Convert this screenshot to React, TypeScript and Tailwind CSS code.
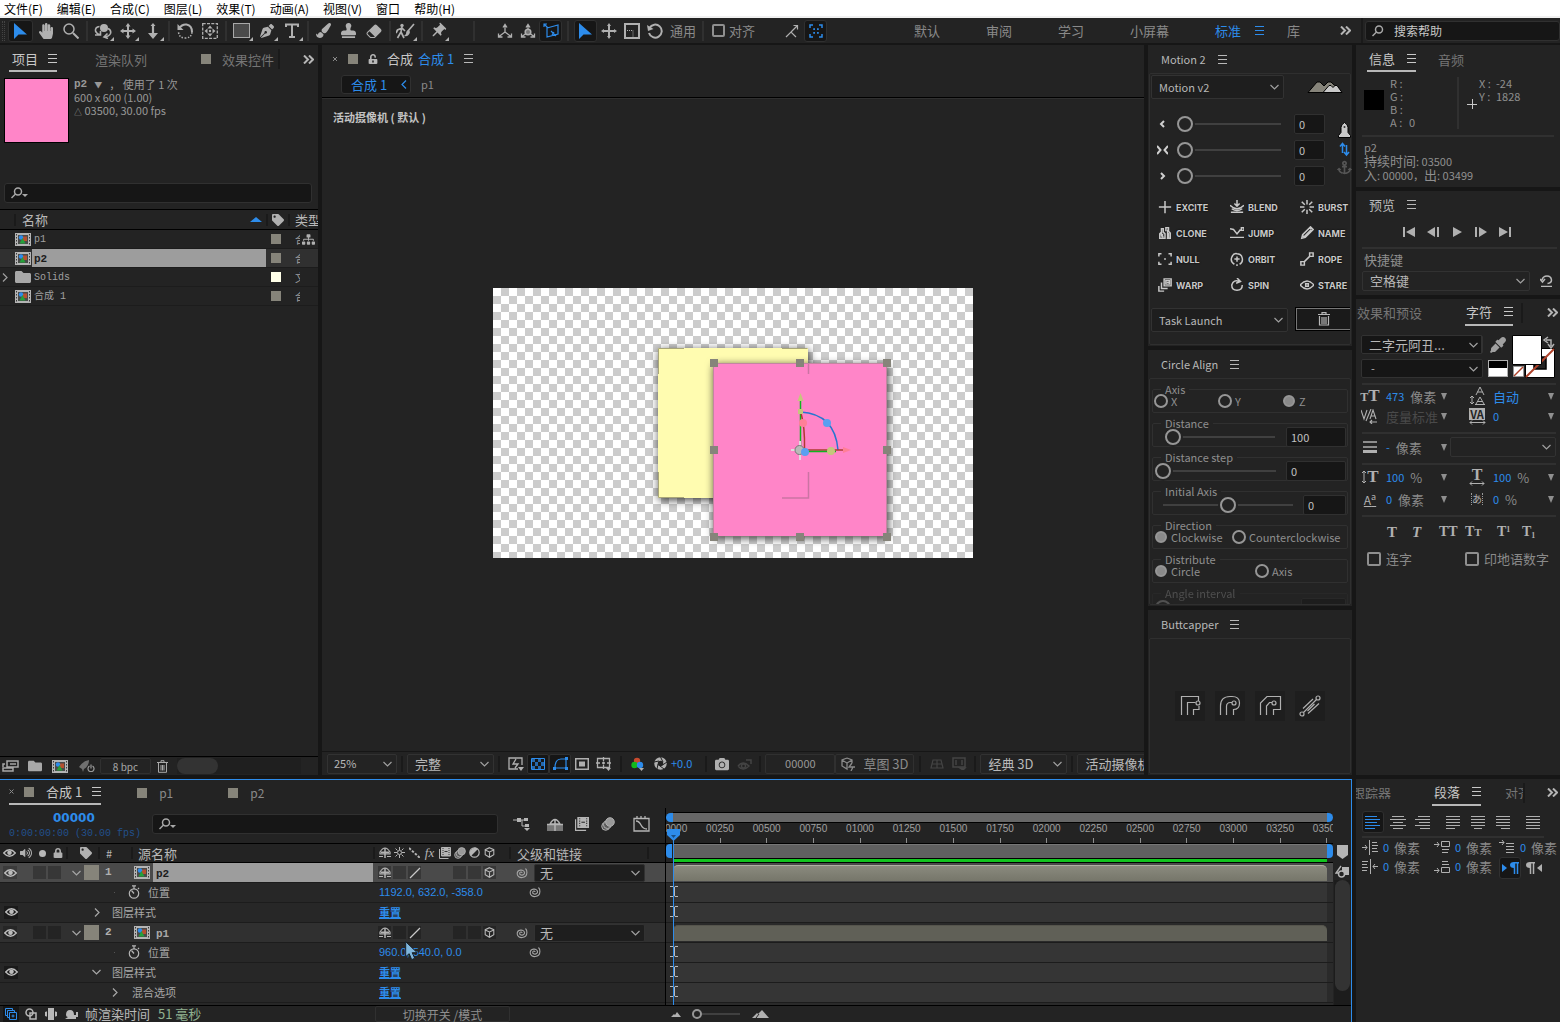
import React from "react";
import {
  FaAnchor,
  FaCamera,
  FaEyeDropper,
  FaFolder,
  FaHandPaper,
  FaLock,
  FaPaintBrush,
  FaPenNib,
  FaSitemap,
  FaStamp,
  FaTag,
  FaUnlockAlt,
  FaVolumeUp,
} from "react-icons/fa";
import { BsEraserFill } from "react-icons/bs";
import { MdPushPin } from "react-icons/md";
import { clsx } from "clsx";

type IconProps = {
  w?: number;
  h?: number;
  className?: string;
  children?: React.ReactNode;
};

const Icon = ({ w = 16, h = 16, className, children }: IconProps) => (
  <svg
    width={w}
    height={h}
    viewBox={`0 0 ${w} ${h}`}
    fill="none"
    stroke="currentColor"
    strokeWidth="1.5"
    className={clsx("shrink-0", className)}
    aria-hidden="true"
  >
    {children}
  </svg>
);

const MenuIcon = ({ className }: { className?: string }) => (
  <Icon w={9} h={9} className={className}>
    <path d="M0 .5h9M0 4.5h9M0 8.5h9" strokeWidth="1" />
  </Icon>
);

const DoubleChevron = () => (
  <Icon w={11} h={9} className="text-[#b5b5b5]">
    <path d="M1 .5l4 4-4 4M6 .5l4 4-4 4" strokeWidth="2" />
  </Icon>
);

const Chevron = ({ className }: { className?: string }) => (
  <Icon w={9} h={6} className={className}>
    <path d="M.5 1l4 4 4-4" strokeWidth="1.2" />
  </Icon>
);

const ChevronRight = ({ className }: { className?: string }) => (
  <Icon w={6} h={9} className={className}>
    <path d="M1 .5l4 4-4 4" strokeWidth="1.2" />
  </Icon>
);

const Caret = () => (
  <Icon w={6} h={7} className="text-[#8f8f8f]">
    <path d="M0 0h6L3 7z" fill="currentColor" stroke="none" />
  </Icon>
);

const SearchIcon = ({ caret = true }: { caret?: boolean }) => (
  <Icon w={18} h={12} className="text-[#a8a8a8]">
    <circle cx="7" cy="4.5" r="3.5" />
    <path d="M4.5 7L.5 11" />
    {caret && <path d="M11 7h6l-3 3z" fill="currentColor" stroke="none" />}
  </Icon>
);

const ArrowIcon = ({ className }: { className?: string }) => (
  <Icon w={13} h={16} className={className}>
    <path d="M0 0v16l4.5-4.5H13z" fill="currentColor" stroke="none" />
  </Icon>
);

const FilmIcon = () => (
  <Icon w={16} h={13}>
    <path d="M0 0h16v13H0z" fill="#b4b4b4" stroke="none" />
    <path d="M1.5 1v12M14.5 1v12" stroke="#3a3a3a" strokeDasharray="1.5 1.5" strokeWidth="1" />
    <path d="M3 2h10v9H3z" fill="#4a4a4a" stroke="none" />
    <path d="M7.500 3.500H12V8H7.500z" fill="#b5502f" stroke="none" />
    <circle cx="6" cy="4.5" r="2.2" fill="#2d8ceb" stroke="none" />
    <path d="M7.500 5l3 5.500h-6z" fill="#25a03a" stroke="none" />
  </Icon>
);

const EyeIcon = () => (
  <Icon w={13} h={8} className="text-[#bdbdbd]">
    <path d="M.7 4Q6.500-2.500 12.300 4 6.500 10.500.7 4z" strokeWidth="1.3" />
    <circle cx="6.5" cy="3.8" r="2.3" fill="currentColor" stroke="none" />
  </Icon>
);

const CubeIcon = () => (
  <Icon w={11} h={11} className="text-[#b5b5b5]">
    <path d="M5.500.7l4.300 2v5L5.500 10.300l-4.300-2.600v-5zM1.200 2.900l4.300 2 4.300-2M5.500 5v5" strokeWidth="1.1" />
  </Icon>
);

const ShyIcon = () => (
  <Icon w={12} h={11} className="text-[#b5b5b5]">
    <path d="M1 7V5Q6-3 11 5v2zM0 9.500h4M8 9.500h4" strokeWidth="1.2" />
    <path d="M2 5.500h8" strokeWidth="2" />
    <path d="M6 1v10" strokeWidth="1.5" />
  </Icon>
);

const BlurIcon = ({ s = 12 }: { s?: number }) => (
  <svg width={s} height={s} viewBox="0 0 12 12" fill="#5c5c5c" stroke="#b5b5b5" strokeWidth=".8" aria-hidden="true">
    <circle cx="4" cy="8" r="3.4" />
    <circle cx="5.5" cy="6.5" r="3.4" />
    <circle cx="7.7" cy="4.3" r="3.7" fill="#999" />
  </svg>
);

const SpiralIcon = () => (
  <Icon w={13} h={12} className="text-[#a5a5a5]">
    <path d="M7 6c0-1.500-2.500-1.200-2.300.6.2 2.300 5 2 4.800-1C9.200 2 2 2.200 2.200 7c.3 5 9.600 5 9.700-1.500Q12 3 10.500 1.500" strokeWidth="1.1" />
  </Icon>
);

const StopwatchIcon = () => (
  <Icon w={12} h={14} className="text-[#b5b5b5]">
    <circle cx="6" cy="8.5" r="4.7" strokeWidth="1.2" />
    <path d="M4 .8h4M6 1v3M6 8.500L3.500 5.500M10 3l1 1" strokeWidth="1.2" />
  </Icon>
);

const FrameStackIcon = ({ s = 12 }: { s?: number }) => (
  <svg width={s} height={s} viewBox="0 0 12 12" fill="none" stroke="#b5b5b5" aria-hidden="true">
    <path d="M.5 2v9.500h9" />
    <path d="M2.500.5h9v8.500h-9z" fill="#b5b5b5" />
    <path d="M4 1v8M10 1v8" stroke="#3a3a3a" strokeDasharray="1 1" />
    <path d="M5.500 4.500h3" stroke="#333" />
  </svg>
);

const Swatch = ({ className }: { className?: string }) => (
  <span className={clsx("size-[10px] shrink-0 bg-[#86847a]", className)} />
);

const Divider = ({ className }: { className?: string }) => (
  <span className={clsx("block h-[2px] shrink-0 bg-[#303030]", className)} />
);

const Bar = ({ className }: { className?: string }) => (
  <span className={clsx("w-[2px] shrink-0 bg-[#1a1a1a]", className)} />
);

type SelectBoxProps = {
  label: string;
  value: string;
  className?: string;
  selectClass?: string;
};

const SelectBox = ({ label, value, className, selectClass }: SelectBoxProps) => (
  <div className={clsx("relative rounded-[2px] border border-[#323232]", className)}>
    <select
      aria-label={label}
      className={clsx("block size-full appearance-none bg-transparent pr-4 outline-none", selectClass ?? "pl-1")}
    >
      <option>{value}</option>
    </select>
    <Chevron className="pointer-events-none absolute top-1/2 right-1 -translate-y-1/2 text-[#a0a0a0]" />
  </div>
);

const Range = ({ label, value = 0, className }: { label: string; value?: number; className?: string }) => (
  <input
    type="range"
    aria-label={label}
    defaultValue={value}
    className={clsx(
      "h-4 min-w-0 appearance-none bg-transparent",
      "[&::-webkit-slider-runnable-track]:h-[2px] [&::-webkit-slider-runnable-track]:bg-[#404040]",
      "[&::-webkit-slider-thumb]:-mt-[7px] [&::-webkit-slider-thumb]:size-4 [&::-webkit-slider-thumb]:appearance-none",
      "[&::-webkit-slider-thumb]:rounded-full [&::-webkit-slider-thumb]:border-2 [&::-webkit-slider-thumb]:border-[#969696]",
      "[&::-webkit-slider-thumb]:bg-[#232323] [&::-webkit-slider-thumb]:shadow-[0_0_0_2px_#232323]",
      className
    )}
  />
);

const NumberBox = ({ label, value, className }: { label: string; value: string; className?: string }) => (
  <input
    aria-label={label}
    defaultValue={value}
    className={clsx(
      "h-5 rounded-[2px] border border-[#303030] bg-[#161616] pl-1 text-[11px] text-[#c0c0c0] outline-none",
      className
    )}
  />
);

const menus = ["文件(F)", "编辑(E)", "合成(C)", "图层(L)", "效果(T)", "动画(A)", "视图(V)", "窗口", "帮助(H)"];

const MenuBar = () => (
  <nav className="flex h-[18px] shrink-0 gap-[14px] border-b-2 border-[#f0f0f0] bg-white pl-1 text-[12px] leading-[15px] text-black">
    {menus.map((menu) => (
      <button key={menu} className="whitespace-nowrap">
        {menu}
      </button>
    ))}
  </nav>
);

type ToolProps = { label: string; active?: boolean; corner?: boolean; small?: boolean; children: React.ReactNode };

const Tool = ({ label, active, corner, small, children }: ToolProps) => (
  <button
    aria-label={label}
    className={clsx(
      "relative flex h-[22px] shrink-0 items-center justify-center rounded-[3px] border",
      small ? "w-[23px]" : "w-[25px]",
      active ? "border-[#303030] bg-[#161616] text-[#2d8ceb]" : "border-transparent text-[#b0b0b0]"
    )}
  >
    {children}
    {corner && (
      <Icon w={4} h={4} className="absolute right-0 bottom-0">
        <path d="M4 0v4H0z" fill="currentColor" stroke="none" />
      </Icon>
    )}
  </button>
);

const ToolSep = () => (
  <span className="flex h-5 w-[7px] shrink-0 justify-center">
    <span className="w-[2px] bg-[#303030]" />
  </span>
);

const AxisIcon = ({ dot }: { dot?: boolean }) => (
  <Icon w={16} h={16}>
    <path d="M8 3v6L2 13.500M8 9l6 4.500M6 4.500L8 1.500l2 3M1.500 10.500V14h4M14.500 10.500V14h-4" strokeWidth="1.3" />
    {dot && <circle cx="8" cy="9" r="2.8" fill="#777" />}
  </Icon>
);

const workspaces = ["默认", "审阅", "学习", "小屏幕"];

const Toolbar = () => (
  <div className="flex h-[25px] shrink-0 items-center bg-[#232323] text-[13px] text-[#8a8a8a]">
    <span className="ml-[2px] h-5 w-[3px] shrink-0 border-x border-dotted border-[#444]" />
    <span className="w-[3px] shrink-0" />
    <Tool label="选取" active>
      <ArrowIcon />
    </Tool>
    <Tool label="手形">
      <FaHandPaper size={16} />
    </Tool>
    <Tool label="缩放">
      <Icon>
        <circle cx="6" cy="6" r="5" />
        <path d="M10 10l5.500 5.500" strokeWidth="2" />
      </Icon>
    </Tool>
    <ToolSep />
    <Tool label="绕光标旋转" corner>
      <Icon w={18}>
        <path d="M5.500 3.500Q1 4 1.500 8q1 3 5 4M1 12h5.500V8" strokeWidth="1.6" />
        <path d="M14 5.500q3.500 1.500 2.500 5-1.500 3-6 3.500M13.500 10.500L10 14l4 1.500" strokeWidth="1.6" />
        <circle cx="10" cy="5" r="4" fill="currentColor" stroke="none" />
      </Icon>
    </Tool>
    <Tool label="平移" corner>
      <Icon>
        <path d="M8 2v12M2 8h12" strokeWidth="2" />
        <path d="M8 0l2.500 3.500h-5zM8 16l2.500-3.500h-5zM0 8l3.500-2.500v5zM16 8l-3.500-2.500v5z" fill="currentColor" stroke="none" />
      </Icon>
    </Tool>
    <Tool label="推拉" corner>
      <Icon w={12}>
        <path d="M6 2v10" strokeWidth="2.2" />
        <path d="M6 0l2.500 3h-5zM6 16L1 10h10z" fill="currentColor" stroke="none" />
      </Icon>
    </Tool>
    <ToolSep />
    <Tool label="旋转">
      <Icon>
        <path d="M2 5.500Q5 1 9.500 1.500 15 2.500 15 9" strokeWidth="2" />
        <path d="M15 9q-.5 6-7 6-6 0-6.500-6" strokeDasharray="1.5 1.5" />
        <path d="M.5 1v6h6z" fill="currentColor" stroke="none" />
      </Icon>
    </Tool>
    <Tool label="锚点">
      <Icon>
        <path d="M.7.7h14.600v14.600H.7z" strokeDasharray="3 1.3" strokeWidth="1.3" />
        <path d="M8 2.500l2.500 3h-5zM8 13.500l2.500-3h-5zM2.500 8l3-2.500v5zM13.500 8l-3-2.500v5z" fill="currentColor" stroke="none" />
        <circle cx="8" cy="8" r="1.2" fill="currentColor" stroke="none" />
      </Icon>
    </Tool>
    <ToolSep />
    <Tool label="矩形" corner>
      <span className="h-[15px] w-[17px] border border-[#a8a8a8] bg-[#4a4a4a]" />
    </Tool>
    <Tool label="钢笔" corner>
      <FaPenNib size={14} />
    </Tool>
    <Tool label="文字" corner>
      <Icon w={14} h={15}>
        <path d="M1 4V1.500h12V4M7 1.500V14M4 14h6" strokeWidth="2" />
      </Icon>
    </Tool>
    <ToolSep />
    <Tool label="画笔">
      <FaPaintBrush size={15} />
    </Tool>
    <Tool label="仿制图章">
      <FaStamp size={15} />
    </Tool>
    <Tool label="橡皮擦">
      <BsEraserFill size={16} />
    </Tool>
    <ToolSep />
    <Tool label="Roto 笔刷" corner>
      <Icon w={19}>
        <circle cx="6" cy="2.5" r="1.7" fill="currentColor" stroke="none" />
        <path d="M6 4L5 9l-3.500 6M5 9l3 6M6 5L1.500 7 0 10M6 5l3 3M18 1l-6 7" strokeWidth="1.7" />
        <path d="M13 7q-3 0-3 4l-2 2q5 1 6-4z" fill="currentColor" stroke="none" />
      </Icon>
    </Tool>
    <ToolSep />
    <Tool label="人偶控点" corner>
      <MdPushPin size={18} className="rotate-45" />
    </Tool>
    <span className="w-5 shrink-0" />
    <ToolSep />
    <span className="w-4 shrink-0" />
    <Tool label="本地轴" small>
      <AxisIcon />
    </Tool>
    <Tool label="世界轴" small>
      <AxisIcon dot />
    </Tool>
    <Tool label="视图轴" small active>
      <Icon>
        <path d="M1 1l4 4M1 4V1h3M4 5l11-3v9L4 14zM8 8l5 5M9 12l2-3" strokeWidth="1.2" />
      </Icon>
    </Tool>
    <span className="flex w-3 shrink-0 justify-center">
      <span className="h-5 w-[2px] bg-[#303030]" />
    </span>
    <Tool label="通用控件" small active>
      <ArrowIcon />
    </Tool>
    <Tool label="位置" small>
      <Icon>
        <path d="M8 2v12M2 8h12" strokeWidth="2" />
        <path d="M8 0l2 3H6zM8 16l2-3H6zM0 8l3-2v4zM16 8l-3-2v4z" fill="currentColor" stroke="none" />
      </Icon>
    </Tool>
    <Tool label="缩放控件" small>
      <Icon>
        <path d="M1 1h14v14H1z" strokeWidth="2" />
        <path d="M3 7.500h6V14" strokeDasharray="1 1" strokeWidth="1" />
      </Icon>
    </Tool>
    <Tool label="旋转控件" small>
      <Icon>
        <path d="M2.500 5a6.500 6.500 0 1 1-.5 5" strokeWidth="2" />
        <path d="M0 2l1 6 5.500-2z" fill="currentColor" stroke="none" />
      </Icon>
    </Tool>
    <span className="ml-1 shrink-0">通用</span>
    <span className="ml-[6px] h-5 w-[2px] shrink-0 bg-[#303030]" />
    <label className="ml-2 flex shrink-0 items-center gap-1">
      <input type="checkbox" className="size-[13px] appearance-none rounded-[2px] border-2 border-[#8f8f8f]" />
      对齐
    </label>
    <span className="w-6 shrink-0" />
    <Tool label="对齐边缘">
      <Icon w={14} h={14}>
        <path d="M1 13l5-5 5 5M6 8l6-6M8.500 1.500H12.500V5.500" strokeWidth="1.2" />
      </Icon>
    </Tool>
    <Tool label="对齐特征" active small>
      <Icon w={14} h={14}>
        <path d="M1 4V1h3M10 1h3v3M13 10v3h-3M4 13H1v-3M5 6V5h1M8 5h1v1M9 8v1H8M6 9H5V8" />
      </Icon>
    </Tool>
    <div className="ml-auto flex items-center gap-[46px]">
      {workspaces.map((name) => (
        <button key={name} className="whitespace-nowrap">
          {name}
        </button>
      ))}
      <button className="flex w-[26px] items-center gap-[14px] whitespace-nowrap text-[#2d8ceb]">
        标准
        <MenuIcon />
      </button>
      <button>库</button>
    </div>
    <button aria-label="更多工作区" className="ml-10 shrink-0">
      <DoubleChevron />
    </button>
    <Bar className="ml-[10px] h-full" />
    <label className="ml-[2px] flex h-5 w-[195px] shrink-0 items-center rounded-[3px] border border-[#303030] bg-[#161616] pl-[6px]">
      <SearchIcon caret={false} />
      <input
        aria-label="搜索帮助"
        placeholder="搜索帮助"
        className="ml-1 min-w-0 text-[12px] outline-none placeholder:text-[#c8c8c8]"
      />
    </label>
  </div>
);

const items = [
  { name: "p1", type: "合成", kind: "comp" },
  { name: "p2", type: "合成", kind: "comp" },
  { name: "Solids", type: "文件夹", kind: "folder" },
  { name: "合成 1", type: "合成", kind: "comp" },
];

const ProjectPanel = () => (
  <section className="flex w-[318px] shrink-0 flex-col bg-[#232323]">
    <div className="flex h-7 shrink-0 items-center text-[13px] text-[#757575]">
      <button className="ml-[9px] flex h-[26px] items-center gap-[10px] border-b-2 border-[#b8b8b8] pl-[3px] text-[#c8c8c8]">
        项目
        <MenuIcon />
      </button>
      <button className="ml-[38px]">渲染队列</button>
      <Swatch className="ml-[54px]" />
      <button className="ml-[11px]">效果控件</button>
      <Bar className="ml-1 h-5" />
      <button aria-label="更多面板" className="ml-auto pr-1">
        <DoubleChevron />
      </button>
    </div>
    <div className="mt-[5px] flex gap-[5px] pl-1 text-[#989898]">
      <span className="size-[65px] border border-black bg-[#ff85c8]" />
      <div className="leading-[13px]">
        <p className="flex gap-[7px] whitespace-pre">
          <b className="font-['Liberation_Mono',monospace]">p2</b>
          <span className="text-[8px]">▼</span>
          <span>， 使用了 1 次</span>
        </p>
        <p>600 x 600 (1.00)</p>
        <p>
          <span className="text-[8px]">△</span> 03500, 30.00 fps
        </p>
      </div>
    </div>
    <label className="mt-10 mr-[6px] ml-1 flex h-5 shrink-0 items-center rounded-[3px] border border-[#303030] bg-[#161616] pl-[6px]">
      <SearchIcon />
      <input aria-label="搜索项目" className="min-w-0 flex-1 outline-none" />
    </label>
    <div className="mt-[6px] min-h-0 flex-1 overflow-hidden">
      <table className="w-full table-fixed border-collapse text-left">
        <thead>
          <tr className="h-5 border-y border-black text-[13px] leading-4 text-[#b8b8b8]">
            <th className="w-[266px] p-0 pl-[14px] font-normal">
              <span className="flex items-center">
                <Bar className="h-3" />
                <span className="ml-[6px] flex-1">名称</span>
                <Icon w={12} h={5} className="mr-1 text-[#2d8ceb]">
                  <path d="M0 5l6-5 6 5z" fill="currentColor" stroke="none" />
                </Icon>
              </span>
            </th>
            <th className="w-[29px] p-0" aria-label="标签">
              <span className="flex items-center gap-1 text-[#b0b0b0]">
                <Bar className="h-3" />
                <FaTag size={12} />
                <Bar className="h-3" />
              </span>
            </th>
            <th className="overflow-hidden p-0 font-normal whitespace-nowrap">类型</th>
          </tr>
        </thead>
        <tbody className="text-[#a0a0a0]">
          {items.map((item) => (
            <tr
              key={item.name}
              className={clsx("h-[19px] border-b border-[#1c1c1c]", item.name === "p2" && "bg-[#303030]")}
            >
              <td className="p-0">
                <span className="flex h-[18px] items-center">
                  <span className="flex w-[15px] shrink-0 justify-start pl-[2px]">
                    {item.kind === "folder" && <ChevronRight />}
                  </span>
                  {item.kind === "folder" ? <FaFolder size={16} className="text-[#a8a8a8]" /> : <FilmIcon />}
                  <span
                    className={clsx(
                      "ml-[1px] h-full flex-1 pl-[2px] font-['Liberation_Mono','Noto_Sans_CJK_SC',monospace] leading-[20px]",
                      item.name === "p2" ? "bg-[#9d9d9d] text-[11px] font-bold text-[#1c1c1c]" : "text-[10px]"
                    )}
                  >
                    {item.name}
                  </span>
                </span>
              </td>
              <td className="p-0 pl-[5px]">
                <span
                  className={clsx("block size-[10px]", item.kind === "folder" ? "bg-[#ffffe8]" : "bg-[#86847a]")}
                />
              </td>
              <td className="p-0">
                <span className="flex h-[18px] items-center gap-[2px]">
                  <span className="w-[5px] overflow-hidden whitespace-nowrap">{item.type}</span>
                  {item.name === "p1" && <FaSitemap size={13} className="shrink-0 text-[#b0b0b0]" />}
                </span>
              </td>
            </tr>
          ))}
        </tbody>
      </table>
    </div>
    <div className="flex h-[19px] shrink-0 items-center border-t border-black pl-[2px] text-[#a8a8a8]">
      <button aria-label="解释素材">
        <Icon w={17} h={12}>
          <path d="M5 1h11v6H5zM8 4h6M3 4H1v3M1 8h10v3H1z" />
        </Icon>
      </button>
      <button aria-label="新建文件夹" className="ml-[9px]">
        <FaFolder size={14} />
      </button>
      <button aria-label="新建合成" className="ml-[10px]">
        <FilmIcon />
      </button>
      <button aria-label="项目设置" className="ml-[11px] text-[#707070]">
        <Icon w={17} h={12}>
          <path d="M0 7Q4 1 10 0q0 6-5 9l-1 3-1-3zM2 12L0 11z" fill="currentColor" stroke="none" />
          <path d="M10.500 6a3 3 0 1 0 3 0M12 4.500v4" stroke="#999" strokeWidth="1.2" />
        </Icon>
      </button>
      <button className="ml-1 h-4 w-[51px] rounded-[2px] border border-[#303030] text-[10px]">8 bpc</button>
      <button aria-label="删除" className="ml-[6px]">
        <Icon w={11} h={13}>
          <path d="M0 2.500h11M4 2V.7h3V2M1.500 3v9.300h8V3M4 5v5.500M5.500 5v5.500M7 5v5.500" strokeWidth="1" />
        </Icon>
      </button>
      <span className="ml-[9px] h-4 w-[124px] bg-[#1f1f1f]">
        <span className="block h-full w-[41px] rounded-full bg-[#333]" />
      </span>
    </div>
  </section>
);

const handles = [
  [221, 75],
  [307, 75],
  [394, 75],
  [221, 162],
  [394, 162],
  [221, 249],
  [307, 249],
  [394, 249],
];

const Stage = () => (
  <svg width="480" height="270" viewBox="0 0 480 270" className="shrink-0" role="img" aria-label="合成 1">
    <defs>
      <pattern id="checker" width="16" height="16" patternUnits="userSpaceOnUse">
        <path d="M0 0h16v16H0z" fill="#fff" />
        <path d="M8 0h8v8H8zM0 8h8v8H0z" fill="#ccc" />
      </pattern>
      <filter id="soft" x="-20%" y="-20%" width="140%" height="140%">
        <feDropShadow dx="1" dy="2" stdDeviation="4" floodColor="#000" floodOpacity=".75" />
      </filter>
    </defs>
    <path d="M0 0h480v270H0z" fill="url(#checker)" />
    <path d="M165 60h150v150H165z" fill="#fffcb0" filter="url(#soft)" />
    <path d="M165.500 86V60.500H191M289 60.500h25.500M165.500 184v25.500H191" stroke="#a9a678" fill="none" />
    <path d="M220 75h174v173H220z" fill="#ff85c8" filter="url(#soft)" />
    <path d="M220.500 75.500h173v173h-173z" fill="none" stroke="#86847a" strokeDasharray="1 1" />
    <path d="M315.500 76v10M315.500 184v26H289" stroke="#cb74a3" fill="none" strokeWidth="1.5" />
    {handles.map(([x, y]) => (
      <path key={`${x}-${y}`} d={`M${x - 4} ${y - 4}h8v8h-8z`} fill="#86847a" />
    ))}
    <g fill="none">
      <path d="M307.500 124Q342 126 345 162" stroke="#2676d0" strokeWidth="1.5" />
      <path d="M307.500 112v48" stroke="#10b520" strokeWidth="1.5" />
      <path d="M308 125q4 14 3.500 36M312 162h42" stroke="#b03a30" strokeWidth="1.5" />
      <path d="M309 163.500h34" stroke="#10b520" strokeWidth="1.5" />
    </g>
    <path d="M307.500 105l3 8h-6zM305 121h5v5h-5z" fill="#c5c77c" />
    <path d="M350 159l8 3-8 3z" fill="#ff7f97" />
    <circle cx="310" cy="135" r="4" fill="#ff7f97" />
    <circle cx="334" cy="135" r="4" fill="#5a9ff0" />
    <path d="M307 153v19M298 162h10" stroke="#ddd" strokeWidth="2" />
    <circle cx="306.5" cy="162" r="4.5" fill="#b9b9b9" stroke="#777" />
    <circle cx="338" cy="163" r="4" fill="#c5c77c" />
    <circle cx="312" cy="164" r="4" fill="#5a9ff0" />
  </svg>
);

const ViewerButton = ({ label, active, children }: { label: string; active?: boolean; children: React.ReactNode }) => (
  <button
    aria-label={label}
    className={clsx(
      "flex h-5 w-[22px] shrink-0 items-center justify-center rounded-[2px] border",
      active ? "border-[#303030] bg-[#161616] text-[#2d8ceb]" : "border-transparent text-[#b0b0b0]"
    )}
  >
    {children}
  </button>
);

const ViewerPanel = () => (
  <section className="flex min-w-0 flex-1 flex-col bg-[#232323]">
    <div className="flex h-[27px] shrink-0 items-center text-[13px]">
      <button aria-label="关闭" className="ml-[10px] text-[#8a8a8a]">
        <Icon w={6} h={6}>
          <path d="M1 1l4 4M5 1L1 5" strokeWidth="1" />
        </Icon>
      </button>
      <Swatch className="ml-[10px]" />
      <FaUnlockAlt size={10} className="ml-[10px] text-[#b8b8b8]" />
      <span className="ml-[9px] text-[#c8c8c8]">合成</span>
      <span className="ml-[5px] text-[#2d8ceb]">合成 1</span>
      <MenuIcon className="ml-[10px] text-[#b8b8b8]" />
    </div>
    <div className="flex h-[26px] shrink-0 items-center border-b border-black pl-[19px]">
      <button className="flex h-[19px] w-[70px] items-center justify-between rounded-[3px] border border-[#303030] bg-[#161616] pr-[3px] pl-[9px] text-[13px] text-[#2d8ceb]">
        合成 1
        <ChevronRight className="rotate-180" />
      </button>
      <button className="ml-[10px] text-[#8a8a8a]">p1</button>
    </div>
    <div className="flex min-h-0 flex-1 flex-col overflow-hidden border-t border-[#303030]">
      <p className="shrink-0 pt-3 pl-[11px] font-bold text-[#c4c4c4]">活动摄像机 ( 默认 )</p>
      <div className="flex min-h-0 flex-1 items-center justify-center pb-[29px]">
        <Stage />
      </div>
    </div>
    <div className="flex h-6 shrink-0 items-center overflow-hidden border-t border-[#161616] pl-[5px] whitespace-nowrap text-[#b8b8b8]">
      <SelectBox label="放大率" value="25%" className="h-5 w-[70px] shrink-0" selectClass="pl-[6px]" />
      <Bar className="mx-1 h-4" />
      <SelectBox
        label="分辨率"
        value="完整"
        className="h-5 w-[87px] shrink-0"
        selectClass="pl-[7px] text-[13px] leading-[18px]"
      />
      <Bar className="mr-[5px] ml-1 h-4" />
      <ViewerButton label="快速预览">
        <Icon w={16} h={14}>
          <path d="M10 12H1V1h13v7M8 2L5 7h5L7 11" strokeWidth="1.3" />
          <path d="M10 10h6l-3 4z" fill="currentColor" stroke="none" />
        </Icon>
      </ViewerButton>
      <ViewerButton label="透明网格" active>
        <Icon w={14} h={12}>
          <path d="M.5.5h13v11H.5z" strokeWidth="1" />
          <path
            d="M1 1h3v3H1zM7 1h3v3H7zM4 4h3v4H4zM10 4h3v4h-3zM1 8h3v3H1zM7 8h3v3H7z"
            fill="currentColor"
            fillOpacity=".7"
            stroke="none"
          />
        </Icon>
      </ViewerButton>
      <ViewerButton label="蒙版可见性" active>
        <Icon w={15} h={13}>
          <path d="M2 11Q2 2 8 2h5v9z" strokeWidth="1.2" />
          <path d="M0 10h3v3H0zM12 0h3v3h-3zM12 10h3v3h-3z" fill="currentColor" stroke="none" />
        </Icon>
      </ViewerButton>
      <ViewerButton label="目标区域">
        <Icon w={14} h={12}>
          <path d="M.7.7h12.600v10.600H.7z" />
          <path d="M4 3.500h6v5H4z" fill="currentColor" stroke="none" />
        </Icon>
      </ViewerButton>
      <ViewerButton label="网格和参考线">
        <Icon w={16} h={14}>
          <path d="M1.500 1.500h12v9h-12zM7.500 0v4M7.500 8v4M0 6h4M11 6h4M6 6h3M7.500 4.500v3" strokeWidth="1.3" />
          <path d="M10 11h5l-2.500 3z" fill="currentColor" stroke="none" />
        </Icon>
      </ViewerButton>
      <Bar className="mx-[5px] h-4" />
      <ViewerButton label="通道">
        <Icon w={14} h={14}>
          <g stroke="none">
            <circle cx="6" cy="4" r="3.2" fill="#c84a2e" />
            <circle cx="3.5" cy="8" r="3.2" fill="#12b91e" />
            <circle cx="9" cy="8" r="3.2" fill="#2d8ceb" />
            <path d="M8 11h5l-2.500 3z" fill="currentColor" />
          </g>
        </Icon>
      </ViewerButton>
      <ViewerButton label="重置曝光度">
        <Icon w={13} h={13}>
          <circle cx="6.5" cy="6.5" r="4.5" strokeWidth="3.5" />
          <path d="M6.500 0L9 5M13 5L8.500 8M10 12L6 9M3 12l1-5M0 5l5-1" stroke="#232323" strokeWidth="1" />
        </Icon>
      </ViewerButton>
      <button className="text-[#2d8ceb]">+0.0</button>
      <Bar className="mr-1 ml-[13px] h-4" />
      <ViewerButton label="拍摄快照">
        <FaCamera size={14} />
      </ViewerButton>
      <ViewerButton label="显示快照">
        <Icon w={15} h={12} className="text-[#444]">
          <path d="M1 8q5-6 11 0-6 6-11 0M9 2h5v4" />
          <circle cx="6.5" cy="8" r="2" />
        </Icon>
      </ViewerButton>
      <Bar className="mx-1 h-4" />
      <button className="h-5 w-[70px] shrink-0 rounded-[2px] border border-[#303030] text-[#989898]">00000</button>
      <button className="flex h-5 w-[79px] shrink-0 items-center rounded-[2px] border border-[#303030] pl-[5px] text-[13px] text-[#8a8a8a]">
        <Icon w={16} h={14} className="mr-[6px]">
          <path d="M6 1l5 2v3M6 1L1 3v6l5 3V6L1 3M6 6l5-3M11 6l-3 4h4l-2 4M11 10h3" strokeWidth="1.3" />
        </Icon>
        草图 3D
      </button>
      <Bar className="mx-[5px] h-4" />
      <ViewerButton label="3D 地平面">
        <Icon w={14} h={10} className="text-[#444]">
          <path d="M3 1h8l2 8H1zM7 1v8M2 5h10" strokeWidth="1.2" />
        </Icon>
      </ViewerButton>
      <ViewerButton label="3D 视图">
        <Icon w={15} h={13} className="text-[#444]">
          <path d="M1 1h12v9H1zM4 3v5M10 3v5" />
          <path d="M8 11h5l-2 2z" fill="currentColor" />
        </Icon>
      </ViewerButton>
      <Bar className="mx-1 h-4" />
      <SelectBox
        label="渲染器"
        value="经典 3D"
        className="h-5 w-[87px] shrink-0"
        selectClass="pl-[7px] text-[13px] leading-[18px]"
      />
      <Bar className="mx-1 h-4" />
      <button className="h-5 shrink-0 rounded-[2px] border border-[#303030] pl-[7px] text-[13px]">活动摄像机</button>
    </div>
  </section>
);

const ScriptTitle = ({ children }: { children: string }) => (
  <h2 className="flex h-7 shrink-0 items-center gap-3 pl-3 text-[#b8b8b8]">
    {children}
    <MenuIcon />
  </h2>
);

const sliderIcons = [
  { name: "in", d: "M7 2L4 5l3 3" },
  { name: "both", d: "M0 1l3.500 4L0 9M11 1L7.500 5 11 9" },
  { name: "out", d: "M4 2l3 3-3 3" },
];

const motionActions = [
  { name: "EXCITE", d: "M8 1v14M1 8h14" },
  { name: "BLEND", d: "M8 0v7M5 4l3 3 3-3M0 6q8 8 16 0M2 10q6 4 12 0M1 14h14" },
  { name: "BURST", d: "M8 0v5M8 11v5M0 8h5M11 8h5M2 2l3.500 3.500M10.500 10.500L14 14M14 2l-3.500 3.500M5.500 10.500L2 14" },
  { name: "CLONE", d: "M2 14V9l2-2V3h2v4l2 2v5zM9 6V2h3v4l2 2v6h-4M4 10h2M4 12h2M3 8l3 5M11 4v9M12 8v5M4 4v8" },
  { name: "JUMP", d: "M0 3l4 1 4 5 4-5M13 2h3v3h-3zM0 13h16" },
  { name: "NAME", d: "M2 14l1-4 9-9 3 3-9 9zM5 12l8-8M3 11l2 2" },
  { name: "NULL", d: "M1 5V2h3M12 2h3v3M15 11v3h-3M4 14H1v-3M7 8h2" },
  { name: "ORBIT", d: "M5 14Q0 11 2 6t6-4q5 0 6 5t-3 7M8 5v6M5 8h6M8 14v2" },
  { name: "ROPE", d: "M1 11h4v4H1zM11 1h4v4h-4zM5 11l6-6" },
  { name: "WARP", d: "M7 1h8v8H7zM9 3h4v4H9zM10 5h3M4 5v7h7M1 9v6h6" },
  { name: "SPIN", d: "M11 4Q4 1 2 8q0 6 6 6t6-6M8 0l4 4-5 2" },
  { name: "STARE", d: "M0 8q8-9 16 0-8 9-16 0M6.500 6.500h3v3h-3z" },
];

const MotionPanel = () => (
  <section className="flex h-[301px] shrink-0 flex-col bg-[#232323] px-[1px] pb-[1px]">
    <ScriptTitle>Motion 2</ScriptTitle>
    <div className="flex min-h-0 flex-1 flex-col rounded-[2px] border border-[#2f2f2f] pt-[1px] pl-[1px]">
      <div className="flex items-center">
        <SelectBox label="脚本" value="Motion v2" className="h-6 w-[133px] bg-[#1e1e1e] text-[#b8b8b8]" selectClass="pl-[7px]" />
        <Icon w={36} h={14} className="ml-[23px]">
          <path d="M1 12.500L10 2h3l4 4 4-4h3l11 10.500z" fill="#86847a" stroke="#000" strokeWidth="1" />
          <path d="M16 12.500l6-7h2l2 2 2-2h2l5 7z" fill="#c8c8c8" stroke="#000" strokeWidth="1" />
        </Icon>
      </div>
      <div className="mt-[15px] flex">
        <div className="flex flex-col gap-[6px]">
          {sliderIcons.map(({ name, d }) => (
            <div key={name} className="flex h-5 items-center">
              <Icon w={11} h={10} className="ml-[6px] text-[#d0d0d0]">
                <path d={d} strokeWidth="2" />
              </Icon>
              <Range label={`ease ${name}`} className="ml-[9px] w-[104px]" />
              <NumberBox label={`ease ${name} value`} value="0" className="ml-[13px] w-[31px]" />
            </div>
          ))}
        </div>
        <div className="ml-3 flex flex-col items-center gap-[3px] pt-2 text-[#c8c8c8]">
          <Icon w={13} h={17}>
            <path
              d="M6.500.5Q10 2.500 10 5.500v5l2.500 3v2H.500v-2l2.500-3v-5q0-3 3.500-5z"
              fill="currentColor"
              stroke="#000"
              strokeWidth="1"
            />
            <circle cx="6.500" cy="5" r="1" fill="#333" stroke="none" />
          </Icon>
          <Icon w={11} h={15} className="text-[#2d8ceb]">
            <path d="M3.500 11V2M1 4.500L3.500 1.500 6 4.500M7.500 3v9M5 10l2.500 3 2.500-3" />
          </Icon>
          <FaAnchor size={15} className="text-[#555]" />
        </div>
      </div>
      <div className="mt-[13px] grid grid-cols-[72px_70px_1fr] gap-y-[10px] overflow-hidden pl-[7px] font-['Inter',sans-serif] text-[9px] font-bold text-[#c8c8c8]">
        {motionActions.map(({ name, d }) => (
          <button key={name} className="flex h-4 items-center gap-1 [text-shadow:0_0_2px_#000]">
            <svg
              width="14"
              height="14"
              viewBox="0 0 16 16"
              fill="none"
              stroke="currentColor"
              strokeWidth="1.7"
              className="shrink-0"
              aria-hidden="true"
            >
              <path d={d} />
            </svg>
            {name}
          </button>
        ))}
      </div>
      <div className="mt-[14px] flex shrink-0 gap-2 overflow-hidden py-[1px]">
        <SelectBox label="任务" value="Task Launch" className="h-6 w-[137px] shrink-0 bg-[#1e1e1e] text-[#b8b8b8]" selectClass="pl-[7px]" />
        <button
          aria-label="清理"
          className="flex h-[22px] flex-1 items-center justify-center border border-r-0 border-[#777] bg-[#1a1a1a] text-[#b8b8b8] outline outline-black"
        >
          <Icon w={12} h={14}>
            <path d="M0 2.500h12M4 2V.7h4V2M1.500 4v9h9V4M4 5v7M6 5v7M8 5v7" strokeWidth="1.2" />
          </Icon>
        </button>
      </div>
    </div>
  </section>
);

const Group = ({ title, dim, children }: { title: string; dim?: boolean; children: React.ReactNode }) => (
  <fieldset
    className={clsx(
      "h-[29px] min-w-0 shrink-0 rounded-[2px] border border-[#303030] text-[#8f8f8f]",
      dim && "opacity-40"
    )}
  >
    <legend className="ml-2 px-1 leading-[10px]">{title}</legend>
    {children}
  </fieldset>
);

const Radio = ({ name, label, on, className }: { name: string; label: string; on?: boolean; className?: string }) => (
  <label className={clsx("flex items-center gap-[3px] leading-3", className)}>
    <input
      type="radio"
      name={name}
      defaultChecked={on}
      className="size-[14px] appearance-none rounded-full border-2 border-[#969696] checked:mx-[1px] checked:size-3 checked:bg-[#8a8a8a]"
    />
    {label}
  </label>
);

const CircleAlignPanel = () => (
  <section className="flex h-64 shrink-0 flex-col bg-[#232323] px-[1px] pb-[1px]">
    <ScriptTitle>Circle Align</ScriptTitle>
    <div className="flex min-h-0 flex-1 flex-col gap-[5px] overflow-hidden rounded-[2px] border border-[#2f2f2f] px-[2px] pt-[5px]">
      <Group title="Axis">
        <div className="flex h-[14px] pl-[1px]">
          <Radio name="axis" label="X" className="w-16" />
          <Radio name="axis" label="Y" className="w-16" />
          <Radio name="axis" label="Z" on />
        </div>
      </Group>
      <Group title="Distance">
        <div className="flex h-[17px] items-center justify-between pr-[1px] pl-3">
          <Range label="Distance" className="w-[110px]" />
          <NumberBox label="Distance value" value="100" className="w-[60px]" />
        </div>
      </Group>
      <Group title="Distance step">
        <div className="flex h-[17px] items-center justify-between pr-[1px] pl-[2px]">
          <Range label="Distance step" className="w-[121px]" />
          <NumberBox label="Distance step value" value="0" className="w-[60px]" />
        </div>
      </Group>
      <Group title="Initial Axis">
        <div className="flex h-[17px] items-center justify-between pr-[1px] pl-[10px]">
          <Range label="Initial Axis" value={50} className="w-[130px]" />
          <NumberBox label="Initial Axis value" value="0" className="w-[43px]" />
        </div>
      </Group>
      <Group title="Direction">
        <div className="flex h-[14px] pl-[1px]">
          <Radio name="direction" label="Clockwise" on className="w-[78px]" />
          <Radio name="direction" label="Counterclockwise" />
        </div>
      </Group>
      <Group title="Distribute">
        <div className="flex h-[14px] pl-[1px]">
          <Radio name="distribute" label="Circle" on className="w-[101px]" />
          <Radio name="distribute" label="Axis" />
        </div>
      </Group>
      <Group title="Angle interval" dim>
        <div className="flex items-center justify-between pr-[1px] pl-[2px]">
          <Range label="Angle interval" className="w-[121px]" />
          <NumberBox label="Angle interval value" value="0" className="w-[45px]" />
        </div>
      </Group>
    </div>
  </section>
);

const caps = [
  { name: "直角", d: "M6.500 24V5.500h17V10M12.500 24V11.500h8M18.500 24v-5.500h5.500V15", dots: [[23, 12]] },
  { name: "圆角", d: "M5.500 24V15q0-9.500 9.500-9.500h2q7.500 0 7.500 6.500T18.500 18.500V24M11.500 24v-8.500q0-4 4-4h1.500", dots: [[19, 12]] },
  { name: "斜角", d: "M5.500 24V12l6.500-6.500h13.500v13h-7V24M11.500 24v-9l3-3.500H17", dots: [[19, 12]] },
  { name: "斜线", d: "M21.500 8.500l-13 13M8 17.500L18 8M13 22.500L24 12.500M12.500 20l7-7", dots: [[23, 7], [7, 23]] },
];

const ButtcapperPanel = () => (
  <section className="flex min-h-0 flex-1 flex-col bg-[#232323] px-[1px] pb-[1px]">
    <ScriptTitle>Buttcapper</ScriptTitle>
    <div className="flex min-h-0 flex-1 items-center justify-center gap-[10px] rounded-[2px] border border-[#2f2f2f]">
      {caps.map(({ name, d, dots }) => (
        <button key={name} aria-label={name} className="bg-[#1e1e1e] text-[#b0b0b0]">
          <Icon w={30} h={30}>
            <path d={d} strokeWidth="1.2" />
            {dots.map(([x, y]) => (
              <circle key={x} cx={x} cy={y} r="2" fill="#1e1e1e" strokeWidth="1.2" />
            ))}
          </Icon>
        </button>
      ))}
    </div>
  </section>
);

const InfoPanel = () => (
  <section className="h-[142px] shrink-0 bg-[#232323] text-[#8f8f8f]">
    <div className="flex h-7 items-center text-[13px]">
      <button className="ml-[11px] flex h-[26px] items-center gap-3 border-b-2 border-[#b8b8b8] pl-[2px] text-[#c8c8c8]">
        信息
        <MenuIcon />
      </button>
      <button className="ml-[22px] text-[#757575]">音频</button>
    </div>
    <div className="mt-1 flex leading-[13px]">
      <span className="mt-[13px] ml-2 size-5 bg-black" />
      <dl className="ml-[6px] grid w-[69px] grid-cols-[19px_1fr] border-r-2 border-[#303030]">
        <dt>R :</dt>
        <dd />
        <dt>G :</dt>
        <dd />
        <dt>B :</dt>
        <dd />
        <dt>A :</dt>
        <dd>0</dd>
      </dl>
      <Icon w={10} h={10} className="mt-[22px] ml-2 text-[#c8c8c8]">
        <path d="M5.500 0v10M0 5.500h10" strokeWidth="1" />
      </Icon>
      <dl className="ml-[2px] grid h-[26px] grid-cols-[17px_1fr]">
        <dt>X :</dt>
        <dd>-24</dd>
        <dt>Y :</dt>
        <dd>1828</dd>
      </dl>
    </div>
    <Divider className="mx-[6px] mt-[6px]" />
    <div className="pt-[3px] pl-2 leading-[14px]">
      <p>p2</p>
      <p>
        <span className="text-[13px]">持续时间</span>: 03500
      </p>
      <p>
        <span className="text-[13px]">入</span>: 00000，<span className="text-[13px]">出</span>: 03499
      </p>
    </div>
  </section>
);

const transport = [
  { name: "第一帧", d: "M0 0h2v10H0zM12 0v10L3 5z" },
  { name: "上一帧", d: "M8 0v10L0 5zM10 0h2v10h-2z" },
  { name: "播放", d: "M2 0v10l9-5z" },
  { name: "下一帧", d: "M0 0h2v10H0zM4 0v10l8-5z" },
  { name: "最后一帧", d: "M0 0v10l9-5zM10 0h2v10h-2z" },
];

const PreviewPanel = () => (
  <section className="h-[104px] shrink-0 bg-[#232323] text-[13px] text-[#8f8f8f]">
    <h2 className="flex h-[27px] items-center gap-3 pl-[13px] text-[#b8b8b8]">
      预览
      <MenuIcon />
    </h2>
    <div className="mt-[9px] flex justify-center gap-3 pr-[2px]">
      {transport.map(({ name, d }) => (
        <button key={name} aria-label={name}>
          <Icon w={12} h={10} className="text-[#b0b0b0]">
            <path d={d} fill="currentColor" stroke="none" />
          </Icon>
        </button>
      ))}
    </div>
    <Divider className="mr-[3px] ml-[6px] mt-[10px]" />
    <p className="mt-[3px] pl-2 leading-4">快捷键</p>
    <div className="mt-[3px] ml-[6px] flex items-center gap-[10px] text-[#b8b8b8]">
      <SelectBox label="快捷键" value="空格键" className="h-5 w-[168px]" selectClass="pl-[7px] leading-[18px]" />
      <button aria-label="重置">
        <Icon w={13} h={12}>
          <path d="M2 5q1-4 5-4t4.500 4q0 3-4 3.500M0 4l2.500 3L5 4M1 11.500h11" />
        </Icon>
      </button>
    </div>
  </section>
);

const Unit = ({ children }: { children: string }) => <span className="text-[13px] text-[#8a8a8a]">{children}</span>;

const CharField = ({
  icon,
  value,
  unit,
  className,
}: {
  icon: React.ReactNode;
  value: string;
  unit?: string;
  className?: string;
}) => (
  <div className={clsx("flex h-5 items-center", className)}>
    <span className="flex w-[18px] shrink-0 justify-center text-[#b0b0b0]">{icon}</span>
    <button className="ml-[7px] flex flex-1 items-center gap-[6px] whitespace-nowrap text-[#2d8ceb]">
      {value}
      {unit && <Unit>{unit}</Unit>}
    </button>
    <Caret />
  </div>
);

const Glyph = ({ children, className }: { children: React.ReactNode; className?: string }) => (
  <span className={clsx("font-['Liberation_Serif',serif] leading-4 font-bold whitespace-nowrap text-[#b0b0b0]", className)}>
    {children}
  </span>
);

const CharacterPanel = () => (
  <section className="min-h-0 flex-1 overflow-hidden bg-[#232323]">
    <div className="flex h-[27px] items-center text-[13px] text-[#757575]">
      <button className="w-[109px] pl-[1px] text-left whitespace-nowrap">效果和预设</button>
      <button className="flex h-full items-center gap-3 border-b-2 border-[#b8b8b8] pl-[1px] text-[#c8c8c8]">
        字符
        <MenuIcon />
      </button>
      <Bar className="ml-2 h-5" />
      <button aria-label="更多面板" className="ml-auto pr-[2px]">
        <DoubleChevron />
      </button>
    </div>
    <div className="mt-[9px] flex pl-[5px]">
      <div className="flex w-[122px] flex-col gap-[5px] text-[#b8b8b8]">
        <SelectBox
          label="字体"
          value="二字元阿丑..."
          className="h-[19px] bg-[#161616]"
          selectClass="pl-[7px] text-[13px] leading-[17px] border-r border-[#323232] bg-clip-padding"
        />
        <SelectBox label="字体样式" value="-" className="h-[19px] bg-[#161616]" selectClass="pl-[9px]" />
      </div>
      <div className="ml-[5px] flex w-5 flex-col items-center gap-[7px] pt-[2px] text-[#a0a0a0]">
        <FaEyeDropper size={16} />
        <span className="h-[17px] w-5 border border-[#b0b0b0] bg-linear-to-b from-black from-50% to-white to-50%" />
      </div>
      <Icon w={43} h={43} className="ml-1">
        <path d="M13.500 13.500h29v29h-29z" fill="#fff" stroke="#000" strokeWidth="1" />
        <path d="M22 22h12v12H22z" fill="#232323" stroke="#000" />
        <path d="M14 42l28-28" stroke="#b0432b" strokeWidth="2" />
        <path d="M.5.5h29v29H.5z" fill="#fff" stroke="#000" strokeWidth="1" />
        <path d="M1.500 31.500h10v10h-10z" fill="#fff" stroke="#999" strokeWidth="1" />
        <path d="M2 41l9-9" stroke="#b0432b" />
        <path d="M34 5h5v6M36 2l-4 3 4 3M36 9l3 4 3-4" stroke="#b0b0b0" />
      </Icon>
    </div>
    <Divider className="mr-1 ml-[6px] mt-[5px]" />
    <div className="grid grid-cols-[86px_86px] gap-x-[21px] pt-[1px] pl-[5px]">
      <CharField icon={<Glyph className="text-[17px]"><small className="text-[12px]">T</small>T</Glyph>} value="473" unit="像素" />
      <CharField
        icon={
          <Icon w={17} h={18}>
            <path d="M3 9v8M1 11l2-2 2 2M1 15l2 2 2-2M7 8l4-8 4 8M8.500 5h5M7 17l4-7 4 7M8.500 14.500h5M6 17.500h10" strokeWidth="1" />
          </Icon>
        }
        value="自动"
        className="text-[13px]"
      />
      <CharField
        icon={
          <Icon w={18} h={15}>
            <path d="M0 1l3 9 3-9M5 12L10 0M9 10l3-9 3 9M10 7h4M9 13h7M11 11l-2 2 2 2" strokeWidth="1.1" />
          </Icon>
        }
        value=""
        unit="度量标准"
        className="[&_button]:gap-0 [&_button>span]:text-[#4a4a4a]"
      />
      <CharField
        icon={
          <span className="flex flex-col items-center">
            <b className="bg-[#b0b0b0] px-[1px] text-[11px] leading-3 text-[#232323]">VA</b>
            <Icon w={17} h={5}>
              <path d="M1 2.500h15M3 .5l-2 2 2 2M14 .5l2 2-2 2" strokeWidth="1" />
            </Icon>
          </span>
        }
        value="0"
      />
    </div>
    <Divider className="mr-1 ml-[6px] mt-[6px]" />
    <div className="flex items-center pt-[3px] pl-[5px]">
      <CharField
        icon={
          <Icon w={14} h={12}>
            <path d="M0 1h14M0 6h14" />
            <path d="M0 10.500h14" strokeWidth="3" />
          </Icon>
        }
        value="-"
        unit="像素"
        className="w-[86px]"
      />
      <SelectBox label="描边样式" value="" className="mr-1 ml-[3px] h-5 flex-1" />
    </div>
    <Divider className="mr-1 ml-[6px] mt-[6px]" />
    <div className="grid grid-cols-[86px_86px] gap-x-[21px] gap-y-[2px] pt-[2px] pl-[5px]">
      <CharField
        icon={
          <span className="flex items-center">
            <Icon w={6} h={14}>
              <path d="M3 1v12M1 3l2-2 2 2M1 11l2 2 2-2" strokeWidth="1" />
            </Icon>
            <Glyph className="text-[17px]">T</Glyph>
          </span>
        }
        value="100"
        unit="%"
      />
      <CharField
        icon={
          <span className="flex flex-col items-center">
            <Glyph className="text-[16px] leading-[13px]">T</Glyph>
            <Icon w={16} h={5}>
              <path d="M1 2.500h14M3 .5l-2 2 2 2M13 .5l2 2-2 2" strokeWidth="1" />
            </Icon>
          </span>
        }
        value="100"
        unit="%"
      />
      <CharField
        icon={<span className="text-[12px] whitespace-nowrap underline">A<sup className="text-[9px]">a</sup></span>}
        value="0"
        unit="像素"
      />
      <CharField icon={<span className="border-x border-dotted border-[#999] text-[10px] leading-3">あ</span>} value="0" unit="%" />
    </div>
    <Divider className="mr-1 ml-[6px] mt-[6px]" />
    <div className="flex items-center pt-[7px] pl-[31px]">
      <button className="w-[25px] text-left"><Glyph className="text-[15px]">T</Glyph></button>
      <button className="w-[27px] text-left"><Glyph className="text-[15px] italic">T</Glyph></button>
      <button className="w-[26px] text-left"><Glyph className="text-[14px]">TT</Glyph></button>
      <button className="w-8 text-left"><Glyph className="text-[14px]">T<small className="text-[11px]">T</small></Glyph></button>
      <button className="w-[25px] text-left"><Glyph className="text-[14px]">T<sup className="text-[8px]">1</sup></Glyph></button>
      <button className="text-left"><Glyph className="text-[14px]">T<sub className="text-[8px]">1</sub></Glyph></button>
    </div>
    <div className="mt-[11px] flex pl-[11px] text-[13px] leading-4 text-[#8a8a8a]">
      <label className="flex w-[98px] items-center gap-[5px]">
        <input type="checkbox" className="size-[14px] appearance-none rounded-[2px] border-2 border-[#8f8f8f]" />
        连字
      </label>
      <label className="flex items-center gap-[5px] whitespace-nowrap">
        <input type="checkbox" className="size-[14px] appearance-none rounded-[2px] border-2 border-[#8f8f8f]" />
        印地语数字
      </label>
    </div>
  </section>
);

const aligns = [
  { name: "左对齐", d: "M0 1.500h12M0 4.500h15M0 7.500h12M0 10.500h15M0 13.500h10", gap: "mr-[3px]", on: true },
  { name: "居中", d: "M2 1.500h12M0 4.500h16M3 7.500h10M0 10.500h16M3 13.500h10", gap: "mr-[2px]" },
  { name: "右对齐", d: "M4 1.500h12M1 4.500h15M5 7.500h11M1 10.500h15M6 13.500h10", gap: "mr-[9px]" },
  { name: "末行左", d: "M1 1.500h14M1 4.500h14M1 7.500h14M1 10.500h14M1 13.500h9", gap: "mr-[3px]" },
  { name: "末行中", d: "M1 1.500h14M1 4.500h14M1 7.500h14M1 10.500h14M4 13.500h8", gap: "mr-[3px]" },
  { name: "末行右", d: "M1 1.500h14M1 4.500h14M1 7.500h14M1 10.500h14M6 13.500h9", gap: "mr-2" },
  { name: "全部", d: "M1 1.500h14M1 4.500h14M1 7.500h14M1 10.500h14M1 13.500h14", gap: "" },
];

const indents = [
  { name: "左缩进", d: "M0 7.500h5M3 5l2 2.500L3 10M7.500 0v15M10 2.500h5M10 5.500h6M10 8.500h5M10 11.500h6" },
  { name: "段前", d: "M0 4.500h5M3 2l2 2.500L3 7M7.500 1.500h8v5h-8zM8 9.500h7M8 12.500h6" },
  { name: "首行缩进", d: "M0 2.500h5M3 0l2 2.500L3 5M7 3.500h8M7 6.500h8M7 9.500h8M7 12.500h8" },
  { name: "右缩进", d: "M16 7.500h-5M13 5l-2 2.500 2 2.500M8.500 0v15M0 2.500h6M0 5.500h5M0 8.500h6M0 11.500h5" },
  { name: "段后", d: "M0 11.500h5M3 9l2 2.500L3 14M7.500 8.500h8v5h-8zM8 2.500h6M8 5.500h7" },
];

const ParagraphPanel = () => (
  <section className="h-[243px] shrink-0 overflow-hidden bg-[#232323]">
    <div className="-ml-1 flex h-[27px] items-center text-[13px] text-[#757575]">
      <button className="w-20 overflow-hidden text-left whitespace-nowrap">跟踪器</button>
      <button className="flex h-full items-center gap-3 border-b-2 border-[#b8b8b8] pl-[2px] text-[#c8c8c8]">
        段落
        <MenuIcon />
      </button>
      <button className="ml-6 w-[18px] overflow-hidden text-left whitespace-nowrap">对齐</button>
      <Bar className="h-5" />
      <button aria-label="更多面板" className="ml-auto pr-[2px]">
        <DoubleChevron />
      </button>
    </div>
    <div className="mt-[5px] flex items-center pl-[6px]">
      {aligns.map(({ name, d, gap, on }) => (
        <button
          key={name}
          aria-label={name}
          className={clsx(
            "flex h-[22px] w-[22px] shrink-0 items-center justify-center rounded-[3px] border",
            gap,
            on ? "border-[#303030] bg-[#161616] text-[#2d8ceb]" : "border-transparent text-[#b0b0b0]"
          )}
        >
          <Icon h={14}>
            <path d={d} strokeWidth="1" />
          </Icon>
        </button>
      ))}
    </div>
    <Divider className="mr-4 ml-[6px] mt-[3px]" />
    <div className="grid grid-cols-[72px_65px_1fr] pl-[6px] text-[#2d8ceb]">
      {indents.map(({ name, d }) => (
        <button key={name} aria-label={name} className="flex h-[19px] items-center gap-[5px] overflow-hidden whitespace-nowrap">
          <Icon h={15} className="text-[#b0b0b0]">
            <path d={d} strokeWidth="1" />
          </Icon>
          0 <Unit>像素</Unit>
        </button>
      ))}
      <div className="flex items-center">
        <button aria-label="从左到右" className="flex h-[22px] w-[22px] items-center justify-center rounded-[3px] border border-[#303030] bg-[#161616]">
          <Icon w={17} h={12}>
            <path d="M0 2v8l5-4zM12 0q-4 0-4 3t4 3z" fill="currentColor" stroke="none" />
            <path d="M12 .7h5M12.500 0v12M15.500 0v12" />
          </Icon>
        </button>
        <button aria-label="从右到左" className="ml-1 text-[#b0b0b0]">
          <Icon w={17} h={12}>
            <path d="M17 2v8l-5-4zM5 0Q1 0 1 3t4 3z" fill="currentColor" stroke="none" />
            <path d="M5 .7h5M5.500 0v12M8.500 0v12" />
          </Icon>
        </button>
      </div>
    </div>
  </section>
);

type Row = {
  kind: "layer" | "position" | "style" | "blend";
  name: string;
  value?: string;
  index?: number;
  selected?: boolean;
  open?: boolean;
};

const rows: Row[] = [
  { kind: "layer", name: "p2", index: 1, selected: true },
  { kind: "position", name: "位置", value: "1192.0, 632.0, -358.0" },
  { kind: "style", name: "图层样式", value: "重置" },
  { kind: "layer", name: "p1", index: 2 },
  { kind: "position", name: "位置", value: "960.0, 540.0, 0.0" },
  { kind: "style", name: "图层样式", value: "重置", open: true },
  { kind: "blend", name: "混合选项", value: "重置" },
];

const Cell = ({ children, empty }: { children?: React.ReactNode; empty?: boolean }) => (
  <span className={clsx("mr-[2px] flex size-[13px] shrink-0 items-center justify-center", !empty && "bg-black/25")}>
    {children}
  </span>
);

const LayerRow = ({ row }: { row: Row }) => (
  <div
    className={clsx(
      "flex h-5 items-center border-b border-[#1c1c1c]",
      row.selected ? "bg-[#4a4a4a]" : "bg-[#303030]"
    )}
  >
    <span className="flex w-[33px] shrink-0 pl-[3px]">
      <button aria-label="显示" className="flex h-[13px] w-[14px] items-center justify-center bg-black/20">
        <EyeIcon />
      </button>
    </span>
    <span className="flex w-9 shrink-0">
      <Cell />
      <Cell />
    </span>
    <button aria-label="展开" className="w-[15px] shrink-0 pl-[3px] text-[#a5a5a5]">
      <Chevron />
    </button>
    <span className="h-[15px] w-[15px] shrink-0 bg-[#86847a]" />
    <b className="w-[35px] shrink-0 pl-[6px] font-['Liberation_Mono',monospace] text-[#b0b0b0]">{row.index}</b>
    <FilmIcon />
    <b
      className={clsx(
        "ml-[3px] h-full w-[220px] shrink-0 pl-[3px] font-['Liberation_Mono',monospace] leading-[22px]",
        row.selected ? "bg-[#9d9d9d] text-[#1c1c1c]" : "text-[#a8a8a8]"
      )}
    >
      {row.name}
    </b>
    <span className="ml-[5px] flex w-[137px] shrink-0">
      <Cell>
        <ShyIcon />
      </Cell>
      <Cell />
      <Cell>
        <Icon w={12} h={12} className="text-[#c8c8c8]">
          <path d="M1 11L11 1" strokeWidth="1.3" />
        </Icon>
      </Cell>
      <Cell empty />
      <Cell empty />
      <Cell />
      <Cell />
      <Cell>
        <CubeIcon />
      </Cell>
    </span>
    <SpiralIcon />
    <SelectBox
      label={`父级 ${row.name}`}
      value="无"
      className="ml-[6px] h-[18px] w-[111px] shrink-0 bg-[#1e1e1e] text-[#b8b8b8]"
      selectClass="pl-[5px] text-[13px] leading-4"
    />
  </div>
);

const PropertyRow = ({ row }: { row: Row }) => (
  <div className="flex h-5 items-center border-b border-[#1c1c1c] bg-[#272727] pb-[1px]">
    <span className="flex w-[94px] shrink-0 pl-1">
      {row.kind === "style" && (
        <button aria-label="显示" className="flex h-[13px] w-[14px] items-center justify-center bg-[#1a1a1a]">
          <EyeIcon />
        </button>
      )}
    </span>
    <span className="flex w-[285px] shrink-0 items-center text-[#a8a8a8]">
      {row.kind === "position" && (
        <>
          <span className="mr-[13px] ml-5 size-[1px] bg-[#555]" />
          <StopwatchIcon />
          <span className="ml-2">{row.name}</span>
        </>
      )}
      {row.kind === "style" && (
        <>
          <span className="w-[18px]">{row.open ? <Chevron className="-ml-[2px]" /> : <ChevronRight />}</span>
          {row.name}
        </>
      )}
      {row.kind === "blend" && (
        <>
          <ChevronRight className="mr-[14px] ml-[18px]" />
          {row.name}
        </>
      )}
    </span>
    {row.kind === "position" ? (
      <>
        <button className="w-[149px] shrink-0 text-left font-['Liberation_Sans',sans-serif] text-[11px] text-[#2d8ceb]">
          {row.value}
        </button>
        <SpiralIcon />
      </>
    ) : (
      <button className="border-b border-[#2d8ceb] leading-3 font-bold text-[#2d8ceb]">{row.value}</button>
    )}
  </div>
);

const Fx = () => <i className="font-['Liberation_Serif',serif] text-[13px] leading-3 text-[#b5b5b5]">fx</i>;

const switchIcons = [
  <ShyIcon />,
  <Icon w={11} h={11} className="text-[#b5b5b5]">
    <path d="M5.500 0v3M5.500 8v3M0 5.500h3M8 5.500h3M1.500 1.500l2 2M7.500 7.500l2 2M9.500 1.500l-2 2M3.500 7.500l-2 2" strokeWidth="1" />
    <circle cx="5.5" cy="5.5" r="2" strokeWidth="1" />
  </Icon>,
  <Icon w={11} h={11} className="text-[#b5b5b5]">
    <path d="M0 1l11 10" strokeWidth="2" strokeDasharray="2.5 1.5" />
  </Icon>,
  <Fx />,
  <FrameStackIcon />,
  <BlurIcon />,
  <Icon w={11} h={11} className="text-[#b5b5b5]">
    <circle cx="5.5" cy="5.5" r="4.7" strokeWidth="1.2" />
    <path d="M9 2L2 9Q-1 5 3 2t6 0z" fill="currentColor" stroke="none" />
  </Icon>,
  <CubeIcon />,
];

const LayerHeader = () => (
  <div className="flex h-5 items-center border-y border-black text-[13px] text-[#b8b8b8]">
    <span className="flex w-[66px] shrink-0 items-center gap-1 pl-[3px] text-[#b0b0b0]">
      <EyeIcon />
      <FaVolumeUp size={12} />
      <span className="ml-[3px] size-[7px] rounded-full bg-[#b8b8b8]" />
      <FaLock size={10} className="ml-[3px]" />
    </span>
    <Bar className="h-3" />
    <FaTag size={12} className="ml-3 text-[#b0b0b0]" />
    <Bar className="ml-[6px] h-3" />
    <span className="ml-[6px] w-[25px] text-[11px]">#</span>
    <Bar className="h-3" />
    <span className="ml-[5px] w-[235px] shrink-0">源名称</span>
    <Bar className="h-3" />
    <span className="ml-[2px] flex w-[132px] shrink-0">
      {switchIcons.map((icon, index) => (
        <span key={index} className="flex w-[15px] justify-center">
          {icon}
        </span>
      ))}
    </span>
    <Bar className="h-3" />
    <span className="ml-[6px] w-[130px] shrink-0">父级和链接</span>
    <Bar className="h-3" />
  </div>
);

const LayerPane = () => (
  <div className="flex w-[665px] shrink-0 flex-col">
    <div className="flex h-[35px] shrink-0 items-start pt-[3px]">
      <div className="w-[152px] shrink-0 pl-[9px]">
        <p className="pl-11 font-['DejaVu_Sans',sans-serif] text-[12px] leading-[15px] font-bold text-[#2d8ceb]">00000</p>
        <p className="font-['Liberation_Mono',monospace] text-[10px] leading-[15px] whitespace-nowrap text-[#22508c]">
          0:00:00:00 (30.00 fps)
        </p>
      </div>
      <label className="mt-[3px] flex h-5 w-[346px] items-center rounded-[3px] border border-[#303030] bg-[#161616] pl-[6px]">
        <SearchIcon />
        <input aria-label="搜索图层" className="min-w-0 flex-1 outline-none" />
      </label>
      <div className="mt-[5px] ml-[15px] flex items-center text-[#b5b5b5]">
        <button aria-label="合成微型流程图">
          <Icon w={18} h={13}>
            <path d="M0 2h6M8 2h7M9 2v6h6" strokeWidth="1" />
            <path d="M4 0h4v4H4zM11 0h4v3h-4zM12 6h4v3h-4zM11 10h6l-3 3z" fill="currentColor" stroke="none" />
          </Icon>
        </button>
        <button aria-label="隐藏消隐图层" className="ml-4">
          <Icon w={16} h={13}>
            <path d="M0 7h16v6H0z" fill="#777" stroke="none" />
            <path d="M3 6Q8-3 13 6zM8 1v12M0 6.500h16" />
          </Icon>
        </button>
        <button aria-label="帧混合" className="ml-3">
          <FrameStackIcon s={14} />
        </button>
        <button aria-label="运动模糊" className="ml-3">
          <BlurIcon s={14} />
        </button>
        <button aria-label="图表编辑器" className="ml-[18px]">
          <Icon w={17} h={16}>
            <path d="M1 2.500h15V15H1zM3 5q3 0 5 4t6 4M4 0v3M8 0v3M12 0v3" strokeWidth="1.3" />
          </Icon>
        </button>
      </div>
    </div>
    <LayerHeader />
    <div className="min-h-0 flex-1 overflow-hidden bg-[#272727]">
      {rows.map((row, index) =>
        row.kind === "layer" ? <LayerRow key={index} row={row} /> : <PropertyRow key={index} row={row} />
      )}
    </div>
  </div>
);

const ticks = Array.from({ length: 15 }, (_, i) => String(i * 250).padStart(5, "0"));

const TrackPane = () => (
  <div className="relative flex min-w-0 flex-1 flex-col border-l border-black">
    <div className="flex h-[35px] shrink-0 flex-col overflow-hidden pt-1">
      <div className="flex h-[11px] shrink-0">
        <span className="my-[1px] w-[7px] rounded-l-full bg-[#2d8ceb]" />
        <span className="flex-1 border-y border-black bg-[#676767]" />
        <span className="my-[1px] w-[6px] rounded-r-full bg-[#2d8ceb]" />
      </div>
      <div className="overflow-hidden pr-[6px] pl-[7px]">
        <div className="-mx-[23px] flex font-['Liberation_Sans',sans-serif] text-[10px] leading-3 text-[#a0a0a0]">
          {ticks.map((tick) => (
            <span key={tick} className="flex min-w-0 flex-1 flex-col items-center">
              {tick}
              <span className="mt-[3px] h-[5px] w-[1px] bg-[#8f8f8f]" />
            </span>
          ))}
        </div>
      </div>
    </div>
    <div className="flex h-5 shrink-0 border-y border-black">
      <span className="h-[14px] w-[6px] rounded-l-[4px] bg-[#2d8ceb]" />
      <span className="ml-[1px] flex flex-1 flex-col">
        <span className="flex-1 border-t border-[#777] bg-[#606060]" />
        <span className="h-1 border-t border-black bg-[#12c41f]" />
      </span>
      <span className="h-[14px] w-[6px] rounded-r-[4px] bg-[#2d8ceb]" />
    </div>
    <div className="min-h-0 flex-1 overflow-hidden bg-[#2a2a2a]">
      {rows.map((row, index) => (
        <div
          key={index}
          className={clsx("flex h-5 border-b border-[#1c1c1c] pr-[6px] pl-[7px]", row.selected && "bg-[#4a4a4a]")}
        >
          {row.kind === "layer" ? (
            <span
              className={clsx(
                "mt-[2px] mb-[1px] flex-1 rounded-t-[5px] border-t",
                row.selected
                  ? "border-[#b0afa4] bg-linear-to-b from-[#8a8a7e] to-[#76766a]"
                  : "border-[#55544c] bg-[#606057]"
              )}
            />
          ) : (
            <span className="flex-1 bg-[#353535]">
              <Icon w={8} h={11} className="mt-[3px] -ml-[3px] text-[#b8b8b8]">
                <path d="M0 .5h3l1 1 1-1h3M0 10.500h3l1-1 1 1h3M4.500 1v9" strokeWidth="1" />
              </Icon>
            </span>
          )}
        </div>
      ))}
    </div>
    <div className="absolute top-[20px] bottom-0 left-0 flex w-[15px] flex-col items-center">
      <Icon w={13} h={13} className="text-[#2d8ceb]">
        <path d="M0 1h13v6l-6.500 6L0 7z" fill="currentColor" stroke="none" />
        <path d="M4 7h5L6.500 10z" fill="#1a4f86" stroke="none" />
      </Icon>
      <span className="w-[1px] flex-1 bg-[#2d8ceb]" />
    </div>
  </div>
);

const TimelineFooter = () => (
  <div className="flex h-[17px] shrink-0 items-center border-t border-black text-[13px] leading-4 text-[#b8b8b8]">
    <div className="flex w-[375px] shrink-0 items-center">
      <button aria-label="图层开关" className="ml-[3px] flex size-4 items-center justify-center bg-[#161616] text-[#2d8ceb]">
        <Icon w={12} h={12}>
          <path d="M7.500 3V.5h-7v7H3M9.500 5V2.500h-7v7H5M4.500 4.500h7v7h-7zM8 6.500v3M6.500 8h3" strokeWidth="1" />
        </Icon>
      </button>
      <button aria-label="转换控制" className="ml-[6px]">
        <Icon w={12} h={12}>
          <circle cx="4.5" cy="4.5" r="3.5" />
          <path d="M5 5h6v6H5z" />
        </Icon>
      </button>
      <button aria-label="入点出点" className="ml-2">
        <Icon w={12} h={12}>
          <path d="M3 0h6v3l3 1v4l-3 1v3H3V9L0 8V4l3-1z" fill="currentColor" stroke="none" />
          <path d="M2.500 3v6M9.500 3v6" stroke="#232323" strokeWidth="1" />
        </Icon>
      </button>
      <button aria-label="渲染时间" className="ml-2">
        <Icon w={13} h={11}>
          <path d="M0 10h11V8h2V3h-2v3H9Q9 1 5 1T1 6q0 2 2 2z" fill="currentColor" stroke="none" />
        </Icon>
      </button>
      <span className="ml-[7px]">帧渲染时间</span>
      <span className="ml-2 text-[#8fb08f]">51 毫秒</span>
    </div>
    <button className="h-4 w-[135px] shrink-0 rounded-[2px] border border-[#303030] text-[12px] text-[#8f8f8f]">
      切换开关 /模式
    </button>
    <Icon w={10} h={5} className="ml-[161px] text-[#b0b0b0]">
      <path d="M0 5l3-3 1 1 2-3 4 5z" fill="currentColor" stroke="none" />
    </Icon>
    <input
      type="range"
      aria-label="时间缩放"
      defaultValue={0}
      className="ml-[11px] h-3 w-12 appearance-none bg-transparent [&::-webkit-slider-runnable-track]:h-[2px] [&::-webkit-slider-runnable-track]:bg-[#404040] [&::-webkit-slider-thumb]:-mt-1 [&::-webkit-slider-thumb]:size-[10px] [&::-webkit-slider-thumb]:appearance-none [&::-webkit-slider-thumb]:rounded-full [&::-webkit-slider-thumb]:border-2 [&::-webkit-slider-thumb]:border-[#969696] [&::-webkit-slider-thumb]:bg-[#232323]"
    />
    <Icon w={17} h={8} className="ml-3 text-[#b0b0b0]">
      <path d="M0 8l5-5 1 1 4-4 7 8z" fill="currentColor" stroke="none" />
      <path d="M4 8l3-4" stroke="#232323" strokeWidth="1" />
    </Icon>
  </div>
);

const TimelinePanel = () => (
  <section className="relative flex h-[243px] shrink-0 flex-col overflow-hidden border-t border-r border-[#2d8ceb] bg-[#232323]">
    <div className="flex h-7 shrink-0 text-[13px] text-[#8a8a8a]">
      <div className="ml-[9px] flex h-[25px] items-center border-b-2 border-[#b8b8b8]">
        <button aria-label="关闭">
          <Icon w={5} h={5}>
            <path d="M.5.5l4 4M4.500.5l-4 4" strokeWidth="1" />
          </Icon>
        </button>
        <Swatch className="ml-[10px]" />
        <button className="ml-3 flex items-center gap-[10px] text-[#c8c8c8]">
          合成 1
          <MenuIcon />
        </button>
      </div>
      <div className="flex h-[25px] items-center text-[12px]">
        <Swatch className="ml-9" />
        <button className="ml-3">p1</button>
        <Swatch className="ml-[55px]" />
        <button className="ml-3">p2</button>
      </div>
    </div>
    <div className="flex min-h-0 flex-1">
      <LayerPane />
      <TrackPane />
      <div className="flex w-[18px] shrink-0 flex-col items-center pt-[37px]">
        <Icon w={11} h={14} className="text-[#b5b5b5]">
          <path d="M0 0h11v10l-5.500 4L0 10z" fill="currentColor" stroke="none" />
        </Icon>
        <Icon w={14} h={13} className="mt-[6px] text-[#b5b5b5]">
          <path d="M7 2h7v8H7z" fill="currentColor" stroke="none" />
          <path d="M6 1L1 8h4" strokeWidth="1.3" />
          <circle cx="6.5" cy="9" r="3" fill="#232323" />
        </Icon>
        <span className="mt-[2px] flex w-4 flex-1 bg-[#1c1c1c]">
          <span className="mx-auto mb-[14px] w-[15px] rounded-full bg-[#333]" />
        </span>
      </div>
    </div>
    <TimelineFooter />
    <Icon w={13} h={20} className="absolute top-[161px] left-[405px]">
      <path d="M.7.7v15l3.500-3 2.500 6 3-1.500-2.500-5.500h5z" fill="#7fb6dc" stroke="#15202a" strokeWidth="1" />
    </Icon>
  </section>
);

const App = () => {
  return (
    <div className="flex h-screen flex-col overflow-hidden bg-[#161616] font-['Noto_Sans_CJK_SC',sans-serif] text-[11px] leading-[13px]">
      <MenuBar />
      <Toolbar />
      <main className="mt-[2px] flex min-h-0 flex-1 gap-1">
        <div className="flex min-w-0 flex-1 flex-col gap-1">
          <div className="flex min-h-0 flex-1 gap-1">
            <ProjectPanel />
            <ViewerPanel />
            <div className="flex w-[204px] shrink-0 flex-col gap-1">
              <MotionPanel />
              <CircleAlignPanel />
              <ButtcapperPanel />
            </div>
          </div>
          <TimelinePanel />
        </div>
        <aside className="flex w-[204px] shrink-0 flex-col gap-1">
          <InfoPanel />
          <PreviewPanel />
          <CharacterPanel />
          <ParagraphPanel />
        </aside>
      </main>
    </div>
  );
};

export default App;
